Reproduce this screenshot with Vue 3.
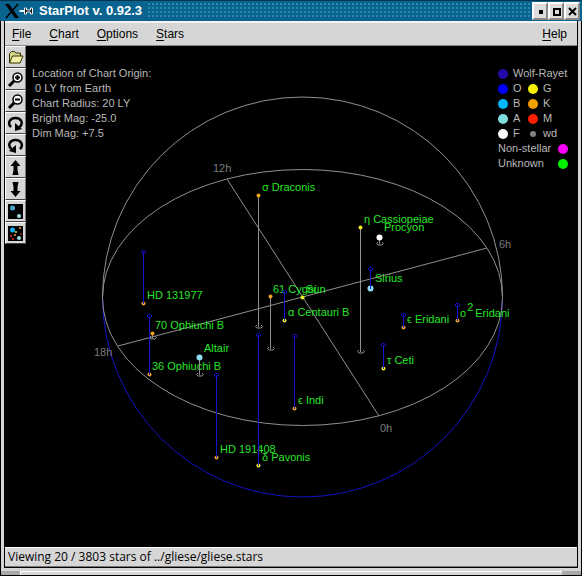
<script setup>
import { ref } from 'vue';

const menus = ['File', 'Chart', 'Options', 'Stars'];
const tools = ['Open', 'Zoom in', 'Zoom out', 'Rotate clockwise', 'Rotate counterclockwise', 'Tilt up', 'Tilt down', 'Fewer stars', 'More stars'];
const info = ['Location of Chart Origin:', '\u00a00 LY from Earth', 'Chart Radius: 20 LY', 'Bright Mag: -25.0', 'Dim Mag: +7.5'];
const status = ref('Viewing 20 / 3803 stars of ../gliese/gliese.stars');

const orange = '#f0a020';
const yellow = '#f4f020';
const cyan = '#90dcf0';

const hours = [
    { name: '12h', x: 213, y: 172 },
    { name: '6h', x: 499, y: 248 },
    { name: '18h', x: 94, y: 356 },
    { name: '0h', x: 380, y: 432 },
];

// foot is where the stem meets the galactic plane
const stars = [
    { name: 'σ Draconis', x: 258, y: 195, foot: 327, color: orange, tx: 262, ty: 191 },
    { name: 'η Cassiopeiae', x: 360, y: 227, foot: 352, color: yellow, tx: 364, ty: 223 },
    { name: 'Procyon', x: 379, y: 237, foot: 244, color: '#ffffff', r: 3, tx: 384, ty: 231 },
    { name: 'Sirius', x: 370, y: 288, foot: 269, color: cyan, r: 3, tx: 375, ty: 282 },
    { name: '61 Cygni', x: 270, y: 296, foot: 349, color: orange, tx: 273, ty: 293 },
    { name: 'α Centauri B', x: 284, y: 320, foot: 292, color: yellow, tx: 288, ty: 316 },
    { name: 'Sun', x: 302, y: 297, foot: 297, color: yellow, tx: 306, ty: 293 },
    { name: 'ϵ Eridani', x: 403, y: 327, foot: 315, color: orange, tx: 407, ty: 323 },
    { name: 'o', sup: '2', rest: 'Eridani', x: 457, y: 320, foot: 305, color: orange, tx: 460, ty: 317 },
    { name: 'τ Ceti', x: 383, y: 368, foot: 345, color: yellow, tx: 387, ty: 364 },
    { name: 'HD 131977', x: 143, y: 303, foot: 252, color: orange, tx: 147, ty: 299 },
    { name: '70 Ophiuchi B', x: 152, y: 333, foot: 338, color: orange, tx: 155, ty: 329 },
    { name: '36 Ophiuchi B', x: 149, y: 374, foot: 316, color: orange, tx: 152, ty: 370 },
    { name: 'Altair', x: 199, y: 357, foot: 375, color: cyan, r: 3, tx: 204, ty: 352 },
    { name: 'HD 191408', x: 216, y: 457, foot: 375, color: orange, tx: 220, ty: 453 },
    { name: 'δ Pavonis', x: 258, y: 465, foot: 335, color: yellow, tx: 262, ty: 461 },
    { name: 'ϵ Indi', x: 294, y: 408, foot: 336, color: orange, tx: 298, ty: 404 },
];
</script>
<template>
    <div class="window">
        <header class="titlebar">
            <svg class="logo" viewBox="0 0 14 16" aria-hidden="true">
                <path d="M0 1h4l10 14h-4z" fill="#000" />
                <path d="M13 1L8 7M6 9l-5 6" stroke="#000" stroke-width="1.5" />
            </svg>
            <svg class="pin" viewBox="0 0 14 8" aria-hidden="true">
                <path d="M0 4h5" stroke="#e8f0f4" stroke-width="2" />
                <path d="M5 1v6h2V5h4v2h2V1h-2v2H7V1z" fill="#111" stroke="#e8f0f4" />
            </svg>
            <h1>StarPlot v. 0.92.3</h1>
            <span class="texture"></span>
            <div class="controls">
                <button aria-label="Minimize"><svg viewBox="0 0 9 9"><path d="M3 3h4v4H3z" /></svg></button>
                <button aria-label="Maximize"><svg viewBox="0 0 9 9"><path d="M1 1h8v8H1zM3 3v4h4V3z" fill-rule="evenodd" /></svg></button>
                <button aria-label="Close"><svg viewBox="0 0 9 9"><path d="M1 1l7 7M8 1L1 8" stroke="#000" stroke-width="2" /></svg></button>
            </div>
        </header>
        <div class="frame">
            <nav>
                <button v-for="menu in menus" :key="menu"><u>{{ menu[0] }}</u>{{ menu.slice(1) }}</button>
                <button class="help"><u>H</u>elp</button>
            </nav>
            <main>
                <div class="toolbar">
                    <button v-for="(tool, index) in tools" :key="tool" :aria-label="tool">
                        <svg viewBox="0 0 17 17">
                            <g v-if="index === 0" stroke="#333300">
                                <path d="M2.500 14V4.500l2-2h3l1 1.500h5v3" fill="#d8d68c" />
                                <path d="M2.500 14l3-7h10.500l-3 7z" fill="#f2f0a8" />
                            </g>
                            <g v-else-if="index < 3" fill="none" stroke="#000">
                                <path d="M7 10l-5 5" stroke-width="3" />
                                <circle cx="10.500" cy="6.500" r="4.500" fill="#fff" stroke-width="1.500" />
                                <path d="M8 6.500h5" stroke-width="2" />
                                <path v-if="index === 1" d="M10.500 4v5" stroke-width="2" />
                            </g>
                            <g v-else-if="index === 3">
                                <path d="M4 12C0 8 3 3 8.500 3s8.500 5 4 9" fill="none" stroke="#000" stroke-width="2.500" />
                                <path d="M8 8v8l7-2z" />
                            </g>
                            <g v-else-if="index === 4">
                                <path d="M13 12c4-4 1-9-4.500-9S0 8 4.500 12" fill="none" stroke="#000" stroke-width="2.500" />
                                <path d="M9 8v8l-7-2z" />
                            </g>
                            <path v-else-if="index === 5" d="M8.500 1l5 6h-3v4l1 5h-6l1-5V7h-3z" />
                            <path v-else-if="index === 6" d="M8.500 16l5-6h-3V6l1-5h-6l1 5v4h-3z" />
                            <g v-else>
                                <path d="M1 1h15v15H1z" />
                                <circle cx="5.500" cy="5" r="2.500" :fill="index === 7 ? '#4aa8cc' : '#10b0f0'" />
                                <circle cx="12" cy="13" r="2" fill="#a0dce0" />
                                <g v-if="index === 8">
                                    <circle cx="13" cy="3" r="1" fill="#e0a040" />
                                    <circle cx="9" cy="7" r="1" fill="#f0e060" />
                                    <circle cx="8" cy="10" r="1" fill="#e8a030" />
                                    <circle cx="4" cy="11" r="1" fill="#f03020" />
                                    <circle cx="6" cy="14" r="1" fill="#f03020" />
                                    <circle cx="14" cy="9" r="1" fill="#902010" />
                                </g>
                            </g>
                        </svg>
                    </button>
                </div>
                <div class="chart">
                    <svg class="sky" viewBox="26 46 551 501" role="img" aria-label="Star chart">
                        <g class="grid">
                            <path d="M102.500 297a200 200 0 0 1 400 0" />
                            <path class="south" d="M102.500 297a200 200 0 0 0 400 0" />
                            <ellipse cx="302.500" cy="297.500" rx="200" ry="128" />
                            <path d="M227 179L379 416M118 346L487 248" />
                        </g>
                        <text v-for="hour in hours" :key="hour.name" class="hour" :x="hour.x" :y="hour.y">{{ hour.name }}</text>
                        <g v-for="star in stars" :key="star.name + star.x">
                            <g v-if="star.foot > star.y" class="stem">
                                <path :d="`M${star.x + .5} ${star.y}V${star.foot}`" />
                                <path :d="`M${star.x - 1} ${star.foot - 2}l-1.500 1.500 1.500 1.500h4l1.500-1.500-1.500-1.500`" />
                            </g>
                            <circle :cx="star.x + .5" :cy="star.y + .5" :r="star.r || 2" :fill="star.color" />
                            <g v-if="star.foot < star.y" class="stem below">
                                <path :d="`M${star.x + .5} ${star.y + 1}V${star.foot}`" />
                                <path :d="`M${star.x - 2} ${star.foot}l1.500-1.500h2l1.500 1.500-1.500 1.500h-2z`" />
                            </g>
                            <text class="name" :x="star.tx" :y="star.ty">{{ star.name }}<tspan v-if="star.sup" dx="1" dy="-6">{{ star.sup }}</tspan><tspan v-if="star.rest" dx="2" dy="6">{{ star.rest }}</tspan></text>
                        </g>
                    </svg>
                    <div class="info">
                        <p v-for="line in info" :key="line">{{ line }}</p>
                    </div>
                    <div class="legend">
                        <p><i class="wr"></i>Wolf-Rayet</p>
                        <p><i class="o"></i><span>O</span><i class="g"></i>G</p>
                        <p><i class="b"></i><span>B</span><i class="k"></i>K</p>
                        <p><i class="a"></i><span>A</span><i class="m"></i>M</p>
                        <p><i class="f"></i><span>F</span><i class="wd"></i>wd</p>
                        <p class="other">Non-stellar<i class="non"></i></p>
                        <p class="other">Unknown<i class="unknown"></i></p>
                    </div>
                </div>
            </main>
            <footer>{{ status }}</footer>
        </div>
        <div class="grip"><span></span></div>
    </div>
</template>
<style>
body{
    background: #000;
}
</style>
<style scoped>
.window{
    font-family: "Liberation Sans", Arial, sans-serif;
    background: #000;
}
.titlebar{
    display: flex;
    align-items: center;
    height: 21px;
    padding: 0 2px 0 5px;
    box-sizing: border-box;
    background: #08648f;
    border-top: 1px solid #043450;
}
.logo{
    width: 14px;
    height: 16px;
}
.pin{
    width: 15px;
    height: 8px;
    margin-right: 5px;
}
h1{
    margin: 0;
    font-size: 13px;
    line-height: 18px;
    color: #fff;
    white-space: nowrap;
}
.texture{
    flex: 1;
    height: 16px;
    margin: 0 2px 0 6px;
    background: radial-gradient(circle at 1px 1px, #2c86ae 1px, transparent 1px) 0 0 / 4px 4px;
}
.controls{
    display: flex;
}
button{
    font-family: inherit;
    margin: 0;
    padding: 0;
    border: none;
    background: none;
    color: #000;
}
.controls button{
    display: flex;
    align-items: center;
    justify-content: center;
    width: 16px;
    height: 18px;
    box-sizing: border-box;
    background: #dcdcdc;
    border: 2px solid #888;
    border-top-color: #fff;
    border-left-color: #fff;
}
.controls svg{
    width: 9px;
    height: 9px;
}
.frame{
    border: solid #d8d4d4;
    border-width: 0 3px 3px;
    margin: 0 1px;
    padding: 0 1px 1px;
}
nav{
    display: flex;
    height: 25px;
    padding: 0 10px 0 7px;
    gap: 18px;
    box-sizing: border-box;
    background: #d6d6d6;
    border-top: 2px solid #f4f4f4;
    border-bottom: 1px solid #888;
}
nav button{
    font-size: 12px;
    line-height: 20px;
}
u{
    text-underline-offset: 2px;
}
.help{
    margin-left: auto;
}
main{
    display: flex;
    background: #000;
}
.toolbar{
    display: flex;
    flex-direction: column;
    width: 21px;
}
.toolbar button{
    display: flex;
    align-items: center;
    justify-content: center;
    height: 22px;
    box-sizing: border-box;
    background: #d6d6d6;
    border: 1px solid #fff;
    border-right-color: #777;
    border-bottom-color: #444;
}
.toolbar svg{
    width: 17px;
    height: 17px;
}
.chart{
    position: relative;
    flex: 1;
}
.sky{
    display: block;
    width: 100%;
}
.grid{
    fill: none;
    stroke: #909090;
}
.grid .south{
    stroke: #1414c8;
}
.stem{
    fill: none;
    stroke: #909090;
}
.below{
    stroke: #1414d0;
}
text{
    font-size: 11px;
}
.hour{
    fill: #7c7c7c;
}
.name{
    fill: #28e428;
}
.info, .legend{
    position: absolute;
    top: 20px;
    font-size: 11px;
    line-height: 15px;
    color: #b8b8b8;
}
.info{
    left: 6px;
}
.legend{
    right: 9px;
    width: 70px;
}
p{
    margin: 0;
    white-space: nowrap;
}
.legend p{
    display: flex;
    align-items: center;
}
.legend i{
    width: 10px;
    height: 10px;
    border-radius: 50%;
    margin-right: 5px;
}
.legend span{
    width: 15px;
}
.legend .other{
    justify-content: space-between;
}
.legend .other i{
    margin-right: 0;
}
.wr{ background: #2408a8; }
.o{ background: #0000f8; }
.b{ background: #00b8f8; }
.a{ background: #80dcdc; }
.f{ background: #f8f8f8; }
.g{ background: #f4f000; }
.k{ background: #f0a000; }
.m{ background: #f82000; }
.legend .wd{
    width: 6px;
    height: 6px;
    margin: 0 7px 0 2px;
    background: #808080;
}
.non{ background: #f800f8; }
.unknown{ background: #00f000; }
footer{
    height: 20px;
    padding-left: 3px;
    box-sizing: border-box;
    font-family: "Open Sans", "Liberation Sans", sans-serif;
    font-size: 12px;
    line-height: 18px;
    background: #d6d6d6;
    border-top: 1px solid #fff;
    border-bottom: 1px solid #777;
    white-space: nowrap;
}
.grip{
    display: flex;
    justify-content: center;
    height: 4px;
    margin: 0 1px;
    background: #aaa;
}
.grip span{
    flex: 1;
    margin: 0 19px;
    background: #d8d8d8;
    border: solid #fff;
    border-width: 1px 0 0 1px;
}
</style>
